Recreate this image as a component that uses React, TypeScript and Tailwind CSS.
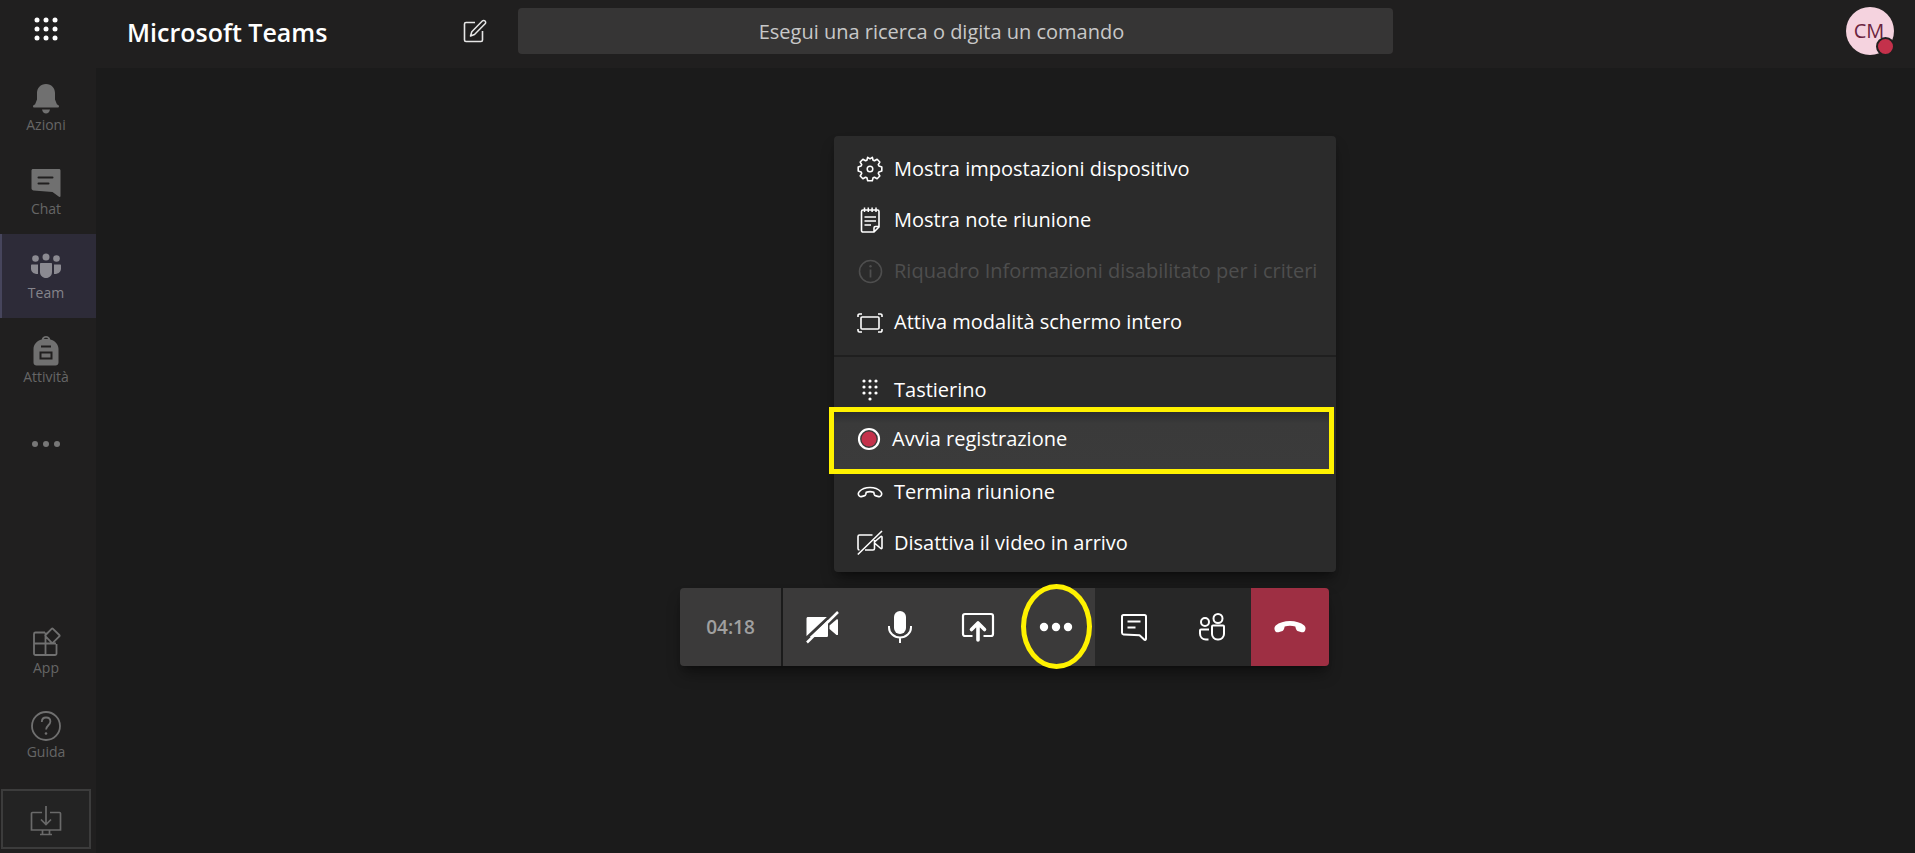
import type { ReactNode } from "react";
import { clsx } from "clsx";

interface RailItem {
  label: string;
  icon: ReactNode;
  active?: boolean;
}

interface MenuEntry {
  label: string;
  icon: ReactNode;
  disabled?: boolean;
  highlighted?: boolean;
}

interface CallAction {
  label: string;
  icon: ReactNode;
  tone: "light" | "dark" | "danger";
  circled?: boolean;
}

function Svg({ w, h, className, children }: { w: number; h: number; className?: string; children: ReactNode }) {
  return (
    <svg width={w} height={h} viewBox={`0 0 ${w} ${h}`} fill="none" className={className} aria-hidden="true">
      {children}
    </svg>
  );
}

// Rail icons
const BellIcon = (
  <Svg w={30} h={30}>
    <path
      d="M15 0C9.500 0 6 4 6 9v6.500L4 20.500c-1.200.2-2 .9-2 1.800 0 .8.500 1.200 1.300 1.200h23.400c.8 0 1.300-.4 1.300-1.200 0-.9-.8-1.600-2-1.800l-2-5V9c0-5-3.500-9-9-9Z"
      fill="currentColor"
    />
    <path d="M11 25.500h8c-.5 2.500-2 4-4 4s-3.500-1.500-4-4Z" fill="currentColor" />
  </Svg>
);

const ChatIcon = (
  <Svg w={30} h={30}>
    <path
      d="M2 1h26c.9 0 1.500.6 1.500 1.500V28c0 .8-.8 1.200-1.500.8L21.500 24 2.500 22.500C1.500 22.400.5 21.600.5 20.500v-18C.5 1.600 1.100 1 2 1Z"
      fill="currentColor"
    />
    <path d="M7.500 9.500h14M7.500 15.500h10" stroke="#201f1f" strokeWidth="2" strokeLinecap="round" />
  </Svg>
);

const TeamIcon = (
  <Svg w={32} h={30}>
    <g fill="currentColor">
      <circle cx="5.500" cy="6.500" r="3.300" />
      <circle cx="16" cy="5" r="3.500" />
      <circle cx="26.500" cy="6.500" r="3.300" />
      <path d="M1 13.500c0-.6.400-1 1-1h6V22c-4 .3-7-2-7-5.500v-3Z" />
      <path d="M31 13.500c0-.6-.4-1-1-1h-6V22c4 .3 7-2 7-5.500v-3Z" />
      <path d="M10 12c0-.6.400-1 1-1h10c.6 0 1 .4 1 1v8c0 3.500-2.600 6-6 6s-6-2.500-6-6v-8Z" />
    </g>
  </Svg>
);

const BackpackIcon = (
  <Svg w={30} h={30}>
    <path
      d="M15 0c-2.200 0-4 1.400-4.300 3.400C6 4.700 2.500 8 2.500 13v13.500c0 1.700 1.300 3 3 3h19c1.700 0 3-1.300 3-3V13c0-5-3.500-8.300-8.200-9.600C19 1.400 17.200 0 15 0Zm0 1.800c1 0 1.800.5 2.200 1.300h-4.400c.4-.8 1.200-1.300 2.200-1.300Z"
      fill="currentColor"
    />
    <path d="M10 10.500h10M9.500 16.500h11v6h-11z" stroke="#201f1f" strokeWidth="2" />
  </Svg>
);

const AppsIcon = (
  <Svg w={30} h={30}>
    <path
      d="M14 5.500H4.500a1.500 1.500 0 0 0-1.500 1.500v19.500A1.500 1.500 0 0 0 4.500 28H24a1.500 1.500 0 0 0 1.500-1.500V17M3 16.500h22M14.500 5.500V28M22 1.800l6.300 6.200a1 1 0 0 1 0 1.400L22 15.600a1 1 0 0 1-1.400 0l-6-6.200a1 1 0 0 1 0-1.400l6-6.200a1 1 0 0 1 1.400 0Z"
      stroke="currentColor"
      strokeWidth="1.800"
    />
  </Svg>
);

const HelpIcon = (
  <Svg w={30} h={30}>
    <circle cx="15" cy="15" r="14" stroke="currentColor" strokeWidth="1.800" />
    <path
      d="M10.800 11c0-2.600 1.700-4.500 4.300-4.500s4.300 1.700 4.300 4.100c0 3.400-4.300 4-4.300 8"
      stroke="currentColor"
      strokeWidth="1.800"
    />
    <circle cx="15" cy="22.500" r="1.300" fill="currentColor" />
  </Svg>
);

const DownloadIcon = (
  <Svg w={32} h={32}>
    <path
      d="M12 7.500H2.500a1 1 0 0 0-1 1V25h29V8.500a1 1 0 0 0-1-1H20M12.500 25v4M19.500 25v4M10 29.500h12M16 1v18M11 14.500l5 5 5-5"
      stroke="currentColor"
      strokeWidth="1.700"
    />
  </Svg>
);

const topItems: RailItem[] = [
  { label: "Azioni", icon: BellIcon },
  { label: "Chat", icon: ChatIcon },
  { label: "Team", icon: TeamIcon, active: true },
  { label: "Attività", icon: BackpackIcon },
];

const bottomItems: RailItem[] = [
  { label: "App", icon: AppsIcon },
  { label: "Guida", icon: HelpIcon },
];

// Menu icons
const GearIcon = (
  <Svg w={26} h={26}>
    <path
      d="M10.700 1.300 9.900 4.200 8.500 4.800 5.900 3.300 3.200 6 4.700 8.600 4.100 10 1.200 10.900v4.200l2.900.8.600 1.500L3.200 20l2.700 2.700 2.600-1.500 1.400.6.800 2.900h4.600l.8-2.900 1.400-.6 2.600 1.500 2.700-2.700-1.500-2.600.6-1.500 2.900-.8v-4.200l-2.900-.9-.6-1.400L22.800 6l-2.700-2.700-2.600 1.500-1.400-.6-.8-2.900-2.300 1.500Z"
      stroke="currentColor"
      strokeWidth="1.600"
      strokeLinejoin="round"
    />
    <circle cx="13" cy="13" r="2.800" stroke="currentColor" strokeWidth="1.500" />
  </Svg>
);

const NotesIcon = (
  <Svg w={26} h={26}>
    <path
      d="M6 3h14.500A1.500 1.500 0 0 1 22 4.500V20l-5 5H6a1.500 1.500 0 0 1-1.500-1.500v-19A1.500 1.500 0 0 1 6 3ZM22 19.500h-3.500A1.500 1.500 0 0 0 17 21v4"
      stroke="currentColor"
      strokeWidth="1.600"
    />
    <path d="M7.500.5V5M11.300.5V5M15.100.5V5M19 .5V5M7.500 10h11.500M7.500 14h11.500M7.500 18H14" stroke="currentColor" strokeWidth="1.500" />
  </Svg>
);

const InfoIcon = (
  <Svg w={26} h={26}>
    <circle cx="13.500" cy="13.500" r="11" stroke="currentColor" strokeWidth="1.600" />
    <path d="M13.500 11.500v8" stroke="currentColor" strokeWidth="1.800" />
    <circle cx="13.500" cy="8.300" r="1.200" fill="currentColor" />
  </Svg>
);

const FullscreenIcon = (
  <Svg w={26} h={26}>
    <rect x="4" y="8" width="18" height="12" rx="1" stroke="currentColor" strokeWidth="1.600" />
    <path
      d="M1 8V6.500A1.500 1.500 0 0 1 2.500 5H5M21 5h2.500A1.500 1.500 0 0 1 25 6.500V8M25 20v1.500a1.500 1.500 0 0 1-1.500 1.500H21M5 23H2.500A1.500 1.500 0 0 1 1 21.500V20"
      stroke="currentColor"
      strokeWidth="1.600"
    />
  </Svg>
);

const KeypadIcon = (
  <Svg w={26} h={26}>
    {[4, 10, 16].map((y) => [7, 13, 19].map((x) => <circle key={`${x}-${y}`} cx={x} cy={y} r="1.600" fill="currentColor" />))}
    <circle cx="13" cy="22" r="1.600" fill="currentColor" />
  </Svg>
);

const RecordIcon = (
  <Svg w={24} h={24}>
    <circle cx="12" cy="12" r="10" stroke="#fff" strokeWidth="2.200" />
    <circle cx="12" cy="12" r="7.500" fill="#c4314b" />
  </Svg>
);

const HangUpOutlineIcon = (
  <Svg w={26} h={26}>
    <path
      d="M13 8.500c-4.200 0-8.200 1.400-10.600 4-1.200 1.300-1.300 3-.4 4.200.5.800 1.400 1.100 2.300.9l2.800-.7c.9-.2 1.500-.9 1.700-1.700l.4-1.900c2.400-.8 5.200-.8 7.600 0l.4 1.900c.2.800.8 1.500 1.700 1.700l2.800.7c.9.2 1.800-.1 2.300-.9.900-1.200.8-2.900-.4-4.200-2.400-2.600-6.400-4-10.600-4Z"
      stroke="currentColor"
      strokeWidth="1.600"
    />
  </Svg>
);

const VideoOffOutlineIcon = (
  <Svg w={26} h={26}>
    <path
      d="M15.500 5H2.500A1.500 1.500 0 0 0 1 6.500v12A1.500 1.500 0 0 0 2.500 20M8 20h8a1.500 1.500 0 0 0 1.500-1.500V10M17.500 13l6.300 5.500c.5.400 1.200.1 1.200-.5V7c0-.6-.7-.9-1.200-.5L17.500 12M.8 24.500 25 1"
      stroke="currentColor"
      strokeWidth="1.600"
    />
  </Svg>
);

const meetingEntries: MenuEntry[] = [
  { label: "Mostra impostazioni dispositivo", icon: GearIcon },
  { label: "Mostra note riunione", icon: NotesIcon },
  { label: "Riquadro Informazioni disabilitato per i criteri", icon: InfoIcon, disabled: true },
  { label: "Attiva modalità schermo intero", icon: FullscreenIcon },
];

const callEntries: MenuEntry[] = [
  { label: "Tastierino", icon: KeypadIcon },
  { label: "Avvia registrazione", icon: RecordIcon, highlighted: true },
  { label: "Termina riunione", icon: HangUpOutlineIcon },
  { label: "Disattiva il video in arrivo", icon: VideoOffOutlineIcon },
];

// Call bar icons
const CameraOffIcon = (
  <Svg w={34} h={34}>
    <path d="M3 7h18.500c1 0 1.500.6 1.500 1.500v17c0 1-.6 1.500-1.500 1.500H3c-1 0-1.500-.6-1.500-1.500v-17C1.500 7.600 2 7 3 7Z" fill="currentColor" />
    <path d="m24.500 15.500 7-6c.6-.5 1.500-.1 1.500.7v14c0 .8-.9 1.200-1.500.7l-7-6v-3.400Z" fill="currentColor" />
    <path d="m0 29.500 31-29" stroke="#3b3a3a" strokeWidth="3" />
    <path d="M2 32.500 33 2" stroke="currentColor" strokeWidth="2.500" />
  </Svg>
);

const MicIcon = (
  <Svg w={26} h={34}>
    <rect x="7" y="1" width="12" height="23" rx="6" fill="currentColor" />
    <path d="M2 16v1.500a11 10 0 0 0 22 0V16M13 27.500V33" stroke="currentColor" strokeWidth="2" />
  </Svg>
);

const ShareIcon = (
  <Svg w={34} h={34}>
    <path
      d="M11.500 26H4a2 2 0 0 1-2-2V6a2 2 0 0 1 2-2h26a2 2 0 0 1 2 2v18a2 2 0 0 1-2 2h-7.500"
      stroke="currentColor"
      strokeWidth="2.200"
    />
    <path d="M17 30V14M10.500 19.500 17 13l6.500 6.500" stroke="currentColor" strokeWidth="3.600" strokeLinecap="round" strokeLinejoin="round" />
  </Svg>
);

const MoreIcon = (
  <Svg w={34} h={10}>
    <circle cx="5" cy="5" r="4.200" fill="currentColor" />
    <circle cx="17" cy="5" r="4.200" fill="currentColor" />
    <circle cx="29" cy="5" r="4.200" fill="currentColor" />
  </Svg>
);

const ConversationIcon = (
  <Svg w={28} h={30}>
    <path
      d="M3.500 3h21A1.500 1.500 0 0 1 26 4.500v22.300c0 .9-1 1.400-1.800.8L19.500 23.300l-16-.9A1.600 1.600 0 0 1 2 20.800V4.500A1.500 1.500 0 0 1 3.500 3Z"
      stroke="currentColor"
      strokeWidth="2"
      strokeLinejoin="round"
    />
    <path d="M7.500 9.500h13M7.500 15.500h8" stroke="currentColor" strokeWidth="2" />
  </Svg>
);

const PeopleIcon = (
  <Svg w={28} h={30}>
    <g stroke="currentColor" strokeWidth="2">
      <circle cx="7" cy="10" r="4" />
      <circle cx="20" cy="6.500" r="4.500" />
      <path d="M11 17.500H3a1 1 0 0 0-1 1v3C2 25 4.500 27.500 8 27.500h2.500" />
      <path d="M15 13.500h10a1 1 0 0 1 1 1V22a5.500 5.500 0 0 1-5.500 5.500h-1A5.500 5.500 0 0 1 14 22v-7.500a1 1 0 0 1 1-1Z" />
    </g>
  </Svg>
);

const HangUpIcon = (
  <Svg w={34} h={14}>
    <path
      d="M17 1C11.500 1 6 2.600 2.700 5.600 1.200 7 1.100 9 2 10.700c.7 1.300 2 1.900 3.400 1.500l3.300-.9c1.300-.3 2.100-1.300 2.400-2.500l.6-2.400c3.300-1 7.300-1 10.600 0l.6 2.400c.3 1.200 1.100 2.200 2.400 2.500l3.300.9c1.400.4 2.700-.2 3.400-1.500.9-1.700.8-3.700-.7-5.100C28 2.600 22.500 1 17 1Z"
      fill="currentColor"
    />
  </Svg>
);

const callActions: CallAction[] = [
  { label: "Attiva videocamera", icon: CameraOffIcon, tone: "light" },
  { label: "Disattiva microfono", icon: MicIcon, tone: "light" },
  { label: "Condividi schermo", icon: ShareIcon, tone: "light" },
  { label: "Altre azioni", icon: MoreIcon, tone: "light", circled: true },
  { label: "Mostra conversazione", icon: ConversationIcon, tone: "dark" },
  { label: "Mostra partecipanti", icon: PeopleIcon, tone: "dark" },
  { label: "Riaggancia", icon: HangUpIcon, tone: "danger" },
];

function RailButton({ item }: { item: RailItem }) {
  return (
    <button
      type="button"
      className={clsx(
        "flex h-[84px] w-full flex-col items-center justify-center gap-px pt-[3px] text-sm leading-5",
        item.active ? "border-l-2 border-[#46455c] bg-[#2d2b38] pr-[6px] text-[#85848c]" : "pr-1 text-[#666666]"
      )}
    >
      <span className={item.active ? "text-[#8b8a91]" : "text-[#707070]"}>{item.icon}</span>
      {item.label}
    </button>
  );
}

function Rail() {
  return (
    <nav className="flex w-24 shrink-0 flex-col bg-[#201f1f]">
      <button type="button" aria-label="Avvio app" className="flex h-[66px] items-center justify-center pr-1 pb-2 text-white">
        <Svg w={26} h={26}>
          {[4, 13, 22].map((y) => [4, 13, 22].map((x) => <circle key={`${x}-${y}`} cx={x} cy={y} r="2.500" fill="currentColor" />))}
        </Svg>
      </button>
      {topItems.map((item) => (
        <RailButton key={item.label} item={item} />
      ))}
      <button type="button" aria-label="Altre app" className="flex h-[84px] items-center justify-center pr-1 text-[#777777]">
        <Svg w={30} h={8}>
          <circle cx="4" cy="4" r="3" fill="currentColor" />
          <circle cx="15" cy="4" r="3" fill="currentColor" />
          <circle cx="26" cy="4" r="3" fill="currentColor" />
        </Svg>
      </button>
      <div className="mt-auto">
        {bottomItems.map((item) => (
          <RailButton key={item.label} item={item} />
        ))}
      </div>
      <button
        type="button"
        aria-label="Scarica app desktop"
        className="mt-3 mr-[5px] mb-1 ml-px flex h-[60px] items-center justify-center border-2 border-[#3c3c3c] bg-[#232323] pt-1 text-[#6a6a6a]"
      >
        {DownloadIcon}
      </button>
    </nav>
  );
}

function Header() {
  return (
    <header className="flex h-[68px] items-start bg-[#201f1f] pt-[7px] pr-[21px] pl-[31px]">
      <h1 className="w-[335px] shrink-0 text-[25px] leading-[50px] font-semibold text-white">Microsoft Teams</h1>
      <button type="button" aria-label="Nuova chat" className="mt-[11px] mr-[30px] text-[#e6e6e6]">
        <Svg w={26} h={26}>
          <path d="M13 4.500H4A1.500 1.500 0 0 0 2.500 6v16A1.500 1.500 0 0 0 4 23.500h15a1.500 1.500 0 0 0 1.500-1.500v-9" stroke="currentColor" strokeWidth="1.600" />
          <path d="M20.300 3a1.900 1.900 0 0 1 2.800 2.800L12.500 16.500 8.500 18l1.300-4.300L20.300 3Z" stroke="currentColor" strokeWidth="1.500" strokeLinejoin="round" />
        </Svg>
      </button>
      <input
        type="text"
        aria-label="Cerca"
        placeholder="Esegui una ricerca o digita un comando"
        className="mt-px h-[46px] w-full max-w-[875px] rounded-[4px] bg-[#363535] pr-7 text-center text-xl text-white placeholder:text-[#c8c8c8]"
      />
      <button
        type="button"
        aria-label="Profilo"
        className="relative ml-auto flex size-12 shrink-0 items-center justify-center rounded-full bg-[#f5d3df] pr-[2px] text-xl font-medium text-[#6b2440]"
      >
        CM
        <span className="absolute -right-px -bottom-px size-[19px] rounded-full border-2 border-[#201f1f] bg-[#c4314b]" />
      </button>
    </header>
  );
}

function MenuRow({ entry }: { entry: MenuEntry }) {
  return (
    <li className="relative">
      {entry.highlighted && (
        <span className="absolute -top-2 right-[2px] -bottom-2 -left-[5px] border-5 border-[#fff200] bg-linear-to-b from-[#2c2e30] via-[#3a3a3a] via-20% to-[#3b3b3b]" />
      )}
      <button
        type="button"
        role="menuitem"
        disabled={entry.disabled}
        className={clsx(
          "relative flex h-[51px] w-full items-center gap-[11px] pl-[23px] text-left text-xl whitespace-nowrap",
          entry.disabled ? "text-[#4e4e4e]" : "text-white",
          entry.highlighted && "pb-[3px]"
        )}
      >
        {entry.icon}
        {entry.label}
      </button>
    </li>
  );
}

function MoreMenu() {
  return (
    <div role="menu" className="absolute -right-[7px] bottom-full mb-4 w-[502px] rounded-[4px] bg-[#2b2b2b] shadow-lg shadow-black/40">
      <ul className="border-b-2 border-[#1f1f1f] pt-[7px] pb-2">
        {meetingEntries.map((entry) => (
          <MenuRow key={entry.label} entry={entry} />
        ))}
      </ul>
      <ul className="pt-[7px] pb-1">
        {callEntries.map((entry) => (
          <MenuRow key={entry.label} entry={entry} />
        ))}
      </ul>
    </div>
  );
}

function CallBar() {
  return (
    <div className="relative">
      <MoreMenu />
      <div className="flex h-[78px] rounded-[4px] shadow-lg shadow-black/40">
        <div className="mr-[2px] flex w-[101px] items-center justify-center rounded-l-[4px] bg-[#3b3a3a] text-[19px] font-semibold text-[#a0a0a0]">
          04:18
        </div>
        {callActions.map((action) => (
          <button
            key={action.label}
            type="button"
            aria-label={action.label}
            className={clsx(
              "relative flex w-[78px] items-center justify-center text-white last:rounded-r-[4px]",
              action.tone === "light" && "bg-[#3b3a3a]",
              action.tone === "dark" && "bg-[#272727]",
              action.tone === "danger" && "bg-[#9e2f43]"
            )}
          >
            {action.icon}
            {action.circled && (
              <span className="absolute -top-1 right-[3px] -bottom-[3px] left-1 rounded-[50%] border-5 border-[#fff200]" />
            )}
          </button>
        ))}
      </div>
    </div>
  );
}

export default function App() {
  return (
    <div className="flex min-h-screen bg-[#1b1b1b] font-['Open_Sans','Noto_Sans',sans-serif]">
      <Rail />
      <div className="flex min-w-0 flex-1 flex-col">
        <Header />
        <main className="flex flex-1 flex-col items-center justify-end pr-[2px] pb-[187px]">
          <CallBar />
        </main>
      </div>
    </div>
  );
}
